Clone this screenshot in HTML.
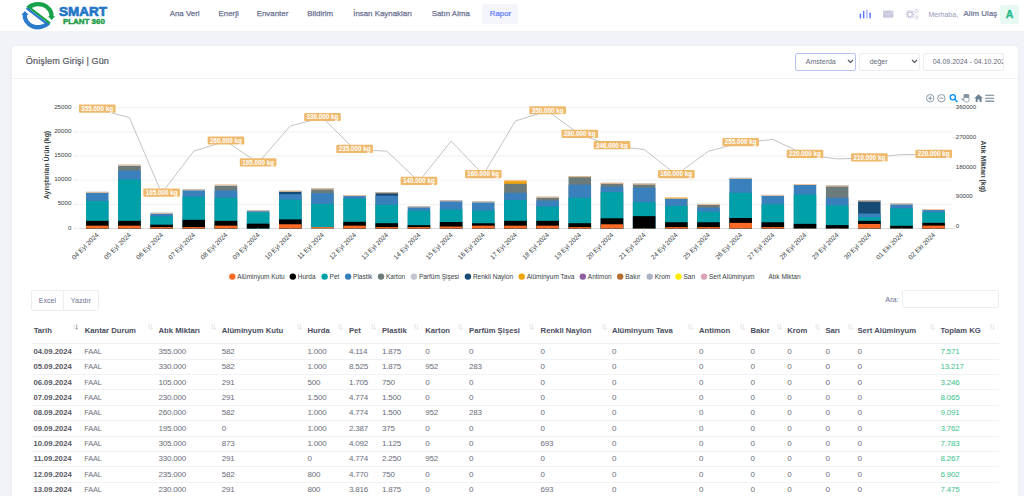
<!DOCTYPE html><html><head><meta charset="utf-8"><style>
*{box-sizing:border-box;margin:0;padding:0}
html,body{width:1024px;height:496px;overflow:hidden;background:#f2f3f8;font-family:"Liberation Sans", sans-serif}
.abs{position:absolute;white-space:nowrap}
#hdr{position:absolute;left:0;top:0;width:1024px;height:31.2px;background:#fff}
.nav{position:absolute;top:9px;font-size:7.9px;color:#6c7293;-webkit-text-stroke:0.25px #6c7293;line-height:10px;white-space:nowrap}
#card{position:absolute;left:12px;top:46px;width:1006px;height:470px;background:#fff;border-radius:3px;box-shadow:0 0 3px rgba(69,65,78,0.07)}
.sel{position:absolute;top:52.5px;white-space:nowrap;height:18px;border:1px solid #ebedf2;border-radius:2px;background:#fff;font-size:7px;color:#666a7a;line-height:16px}
.th{position:absolute;top:326px;font-size:7.7px;font-weight:700;color:#4a4d5e;line-height:9px;white-space:nowrap}
.td{position:absolute;font-size:8px;letter-spacing:-0.2px;color:#6a6d7b;line-height:9px;white-space:nowrap}
.rl{position:absolute;left:31px;width:968px;height:1px;background:#f1f2f6}

</style></head><body>
<div id="hdr">
<svg class="abs" style="left:0;top:0" width="120" height="31" viewBox="0 0 120 31">
<path d="M27.89 8.19 A13.4 11.6 0 0 1 51.42 17.26" fill="none" stroke="#17a14a" stroke-width="4.3"/>
<path d="M47.9 16.2 L55.2 16.2 L51.6 20.0 Z" fill="#17a14a"/>
<path d="M48.41 23.11 A13.4 11.6 0 0 1 24.95 13.64" fill="none" stroke="#2b7bcb" stroke-width="4.3"/>
<path d="M21.4 15.0 L28.6 15.0 L25.0 11.0 Z" fill="#2b7bcb"/>
<path d="M27.9 6.3 L50.0 23.3" stroke="#17a14a" stroke-width="2.3"/>
<path d="M26.5 8.1 L48.6 25.1" stroke="#2b7bcb" stroke-width="2.3"/>
<text x="59" y="16.2" font-family="Liberation Sans" font-weight="700" font-size="13.5" fill="#1f76c6" stroke="#1f76c6" stroke-width="0.7" textLength="48" lengthAdjust="spacingAndGlyphs">SMART</text>
<text x="62.9" y="23.5" font-family="Liberation Sans" font-weight="700" font-size="7.8" fill="#1c9c47" stroke="#1c9c47" stroke-width="0.45" textLength="42" lengthAdjust="spacingAndGlyphs">PLANT 360</text>
</svg>
<div class="abs" style="left:482px;top:4.4px;width:36.4px;height:19.3px;background:#f4f4fb;border-radius:3px"></div>
<div class="nav" style="left:169.7px">Ana Veri</div>
<div class="nav" style="left:218.5px">Enerji</div>
<div class="nav" style="left:256.7px">Envanter</div>
<div class="nav" style="left:307.3px">Bildirim</div>
<div class="nav" style="left:353.2px">İnsan Kaynakları</div>
<div class="nav" style="left:431.7px">Satın Alma</div>
<div class="nav" style="left:489.7px;color:#5d78ff;-webkit-text-stroke:0.2px #5d78ff">Rapor</div>
<svg class="abs" style="left:855px;top:5px" width="70" height="20" viewBox="855 5 70 20">
<rect x="859.6" y="13.6" width="1.5" height="4.9" fill="#5d78ff" rx="0.7"/>
<rect x="862.9" y="10.8" width="1.5" height="7.7" fill="#5d78ff" rx="0.7"/>
<rect x="866.2" y="9.6" width="1.5" height="8.9" fill="#a9b6ff" rx="0.7"/>
<rect x="869.3" y="12.6" width="1.5" height="5.9" fill="#5d78ff" rx="0.7"/>
<rect x="883" y="10.6" width="10.3" height="7.2" rx="0.8" fill="#c9cbdc"/>
<path d="M883.2 11.2 L888.15 14.8 L893.1 11.2" fill="none" stroke="#e6e7ef" stroke-width="0.7"/>
<circle cx="910" cy="14.3" r="3.6" fill="none" stroke="#c9cbdc" stroke-width="1.6" stroke-dasharray="1.2 0.9"/>
<circle cx="910" cy="14.3" r="2.3" fill="none" stroke="#c9cbdc" stroke-width="1.3"/>
<circle cx="916.4" cy="10.9" r="1.7" fill="none" stroke="#c9cbdc" stroke-width="0.9"/>
<circle cx="916.4" cy="17.4" r="1.5" fill="none" stroke="#c9cbdc" stroke-width="0.9"/>
</svg>
<div class="abs" style="left:928.5px;top:9.5px;font-size:7px;color:#959cb6;line-height:9px">Merhaba,</div>
<div class="abs" style="left:963.5px;top:9px;font-size:7.8px;font-weight:400;color:#6c7293;-webkit-text-stroke:0.22px #6c7293;line-height:10px;letter-spacing:0.1px">Alim Ulaş</div>
<div class="abs" style="left:1000px;top:5px;width:19px;height:18.5px;background:#e8f8f3;border-radius:3px;color:#1fbb88;-webkit-text-stroke:0.3px #1fbb88;font-weight:700;font-size:10.5px;line-height:18.5px;text-align:center">A</div>
</div>
<div id="card"></div>
<div class="abs" style="left:25.8px;top:56px;font-size:9.1px;color:#575962;-webkit-text-stroke:0.2px #575962;letter-spacing:0.1px;line-height:10px">Önişlem Girişi | Gün</div>
<div class="abs" style="left:12px;top:77.5px;width:1006px;height:1px;background:#f0f1f6"></div>
<div class="sel" style="left:795.3px;width:61.2px;border-color:#b9c2f5;padding-left:9.5px">Amsterda</div>
<svg class="abs" style="left:846.5px;top:59px" width="7" height="5" viewBox="0 0 7 5"><path d="M1 1 L3.5 3.5 L6 1" fill="none" stroke="#575962" stroke-width="1.2"/></svg>
<div class="sel" style="left:859.2px;width:60.6px;padding-left:9.5px">değer</div>
<svg class="abs" style="left:910.5px;top:59px" width="7" height="5" viewBox="0 0 7 5"><path d="M1 1 L3.5 3.5 L6 1" fill="none" stroke="#575962" stroke-width="1.2"/></svg>
<div class="sel" style="left:923.2px;width:81.2px;padding-left:8.5px;overflow:hidden;color:#666a7a">04.09.2024 - 04.10.2024</div>
<svg class="abs" style="left:0;top:0" width="1024" height="496" viewBox="0 0 1024 496">
<line x1="79" y1="107.75" x2="952.5" y2="107.75" stroke="#ececec" stroke-width="0.8"/>
<line x1="74" y1="107.75" x2="77.5" y2="107.75" stroke="#e0e0e0" stroke-width="0.8"/>
<line x1="79" y1="131.90" x2="952.5" y2="131.90" stroke="#ececec" stroke-width="0.8"/>
<line x1="74" y1="131.90" x2="77.5" y2="131.90" stroke="#e0e0e0" stroke-width="0.8"/>
<line x1="79" y1="156.05" x2="952.5" y2="156.05" stroke="#ececec" stroke-width="0.8"/>
<line x1="74" y1="156.05" x2="77.5" y2="156.05" stroke="#e0e0e0" stroke-width="0.8"/>
<line x1="79" y1="180.20" x2="952.5" y2="180.20" stroke="#ececec" stroke-width="0.8"/>
<line x1="74" y1="180.20" x2="77.5" y2="180.20" stroke="#e0e0e0" stroke-width="0.8"/>
<line x1="79" y1="204.35" x2="952.5" y2="204.35" stroke="#ececec" stroke-width="0.8"/>
<line x1="74" y1="204.35" x2="77.5" y2="204.35" stroke="#e0e0e0" stroke-width="0.8"/>
<line x1="74" y1="228.5" x2="77.5" y2="228.5" stroke="#e0e0e0" stroke-width="0.8"/>
<line x1="79" y1="228.5" x2="952.5" y2="228.5" stroke="#d8d8d8" stroke-width="0.9"/>
<line x1="952.5" y1="107.50" x2="955.5" y2="107.50" stroke="#e0e0e0" stroke-width="0.8"/>
<line x1="952.5" y1="137.75" x2="955.5" y2="137.75" stroke="#e0e0e0" stroke-width="0.8"/>
<line x1="952.5" y1="168.00" x2="955.5" y2="168.00" stroke="#e0e0e0" stroke-width="0.8"/>
<line x1="952.5" y1="198.25" x2="955.5" y2="198.25" stroke="#e0e0e0" stroke-width="0.8"/>
<line x1="952.5" y1="228.50" x2="955.5" y2="228.50" stroke="#e0e0e0" stroke-width="0.8"/>
<text x="71.4" y="108.75" text-anchor="end" font-family="Liberation Sans" font-size="6.2" fill="#373d3f">25000</text>
<text x="71.4" y="132.90" text-anchor="end" font-family="Liberation Sans" font-size="6.2" fill="#373d3f">20000</text>
<text x="71.4" y="157.05" text-anchor="end" font-family="Liberation Sans" font-size="6.2" fill="#373d3f">15000</text>
<text x="71.4" y="181.20" text-anchor="end" font-family="Liberation Sans" font-size="6.2" fill="#373d3f">10000</text>
<text x="71.4" y="205.35" text-anchor="end" font-family="Liberation Sans" font-size="6.2" fill="#373d3f">5000</text>
<text x="71.4" y="229.50" text-anchor="end" font-family="Liberation Sans" font-size="6.2" fill="#373d3f">0</text>
<text x="955.8" y="108.70" font-family="Liberation Sans" font-size="6.1" fill="#373d3f">360000</text>
<text x="955.8" y="138.60" font-family="Liberation Sans" font-size="6.1" fill="#373d3f">270000</text>
<text x="955.8" y="168.50" font-family="Liberation Sans" font-size="6.1" fill="#373d3f">180000</text>
<text x="955.8" y="198.40" font-family="Liberation Sans" font-size="6.1" fill="#373d3f">90000</text>
<text x="955.8" y="228.30" font-family="Liberation Sans" font-size="6.1" fill="#373d3f">0</text>
<text transform="translate(48.6,165) rotate(-90)" text-anchor="middle" font-family="Liberation Sans" font-weight="700" font-size="6.9" fill="#373d3f">Ayrıştırılan Ürün (kg)</text>
<text transform="translate(980.5,166.3) rotate(90)" text-anchor="middle" font-family="Liberation Sans" font-weight="700" font-size="6.9" fill="#373d3f">Atık Miktarı (kg)</text>
<rect x="86.00" y="191.86" width="22.5" height="36.64" fill="#3a80bd"/>
<rect x="86.00" y="200.93" width="22.5" height="27.57" fill="#00a0a8"/>
<rect x="86.00" y="220.84" width="22.5" height="7.66" fill="#000000"/>
<rect x="86.00" y="225.68" width="22.5" height="2.82" fill="#ff6a26"/>
<rect x="86.00" y="191.86" width="22.5" height="1.0" fill="#f3c69c"/>
<line x1="97.25" y1="228.5" x2="97.25" y2="232" stroke="#e0e0e0" stroke-width="0.8"/>
<text transform="translate(99.15,235.3) rotate(-45)" text-anchor="end" font-family="Liberation Sans" font-size="6.6" fill="#373d3f">04 Eyl 2024</text>
<rect x="118.17" y="164.53" width="22.5" height="63.97" fill="#c3c6d1"/>
<rect x="118.17" y="165.90" width="22.5" height="62.60" fill="#6b7b7b"/>
<rect x="118.17" y="170.51" width="22.5" height="57.99" fill="#3a80bd"/>
<rect x="118.17" y="179.58" width="22.5" height="48.92" fill="#00a0a8"/>
<rect x="118.17" y="220.84" width="22.5" height="7.66" fill="#000000"/>
<rect x="118.17" y="225.68" width="22.5" height="2.82" fill="#ff6a26"/>
<rect x="118.17" y="164.53" width="22.5" height="1.0" fill="#f3c69c"/>
<line x1="129.42" y1="228.5" x2="129.42" y2="232" stroke="#e0e0e0" stroke-width="0.8"/>
<text transform="translate(131.32,235.3) rotate(-45)" text-anchor="end" font-family="Liberation Sans" font-size="6.6" fill="#373d3f">05 Eyl 2024</text>
<rect x="150.34" y="212.79" width="22.5" height="15.71" fill="#3a80bd"/>
<rect x="150.34" y="216.42" width="22.5" height="12.08" fill="#00a0a8"/>
<rect x="150.34" y="224.67" width="22.5" height="3.83" fill="#000000"/>
<rect x="150.34" y="227.09" width="22.5" height="1.41" fill="#ff6a26"/>
<rect x="150.34" y="212.79" width="22.5" height="1.0" fill="#f3c69c"/>
<line x1="161.59" y1="228.5" x2="161.59" y2="232" stroke="#e0e0e0" stroke-width="0.8"/>
<text transform="translate(163.49,235.3) rotate(-45)" text-anchor="end" font-family="Liberation Sans" font-size="6.6" fill="#373d3f">06 Eyl 2024</text>
<rect x="182.51" y="189.47" width="22.5" height="39.03" fill="#3a80bd"/>
<rect x="182.51" y="196.73" width="22.5" height="31.77" fill="#00a0a8"/>
<rect x="182.51" y="219.83" width="22.5" height="8.67" fill="#000000"/>
<rect x="182.51" y="227.09" width="22.5" height="1.41" fill="#ff6a26"/>
<rect x="182.51" y="189.47" width="22.5" height="1.0" fill="#f3c69c"/>
<line x1="193.76" y1="228.5" x2="193.76" y2="232" stroke="#e0e0e0" stroke-width="0.8"/>
<text transform="translate(195.66,235.3) rotate(-45)" text-anchor="end" font-family="Liberation Sans" font-size="6.6" fill="#373d3f">07 Eyl 2024</text>
<rect x="214.68" y="184.50" width="22.5" height="44.00" fill="#c3c6d1"/>
<rect x="214.68" y="185.87" width="22.5" height="42.63" fill="#6b7b7b"/>
<rect x="214.68" y="190.48" width="22.5" height="38.02" fill="#3a80bd"/>
<rect x="214.68" y="197.74" width="22.5" height="30.76" fill="#00a0a8"/>
<rect x="214.68" y="220.84" width="22.5" height="7.66" fill="#000000"/>
<rect x="214.68" y="225.68" width="22.5" height="2.82" fill="#ff6a26"/>
<rect x="214.68" y="184.50" width="22.5" height="1.0" fill="#f3c69c"/>
<line x1="225.93" y1="228.5" x2="225.93" y2="232" stroke="#e0e0e0" stroke-width="0.8"/>
<text transform="translate(227.83,235.3) rotate(-45)" text-anchor="end" font-family="Liberation Sans" font-size="6.6" fill="#373d3f">08 Eyl 2024</text>
<rect x="246.85" y="210.29" width="22.5" height="18.21" fill="#3a80bd"/>
<rect x="246.85" y="212.11" width="22.5" height="16.39" fill="#00a0a8"/>
<rect x="246.85" y="223.66" width="22.5" height="4.84" fill="#000000"/>
<rect x="246.85" y="210.29" width="22.5" height="1.0" fill="#f3c69c"/>
<line x1="258.10" y1="228.5" x2="258.10" y2="232" stroke="#e0e0e0" stroke-width="0.8"/>
<text transform="translate(260.00,235.3) rotate(-45)" text-anchor="end" font-family="Liberation Sans" font-size="6.6" fill="#373d3f">09 Eyl 2024</text>
<rect x="279.02" y="190.83" width="22.5" height="37.67" fill="#154b74"/>
<rect x="279.02" y="194.18" width="22.5" height="34.32" fill="#3a80bd"/>
<rect x="279.02" y="199.63" width="22.5" height="28.87" fill="#00a0a8"/>
<rect x="279.02" y="219.43" width="22.5" height="9.07" fill="#000000"/>
<rect x="279.02" y="224.27" width="22.5" height="4.23" fill="#ff6a26"/>
<rect x="279.02" y="190.83" width="22.5" height="1.0" fill="#f3c69c"/>
<line x1="290.27" y1="228.5" x2="290.27" y2="232" stroke="#e0e0e0" stroke-width="0.8"/>
<text transform="translate(292.17,235.3) rotate(-45)" text-anchor="end" font-family="Liberation Sans" font-size="6.6" fill="#373d3f">10 Eyl 2024</text>
<rect x="311.19" y="188.49" width="22.5" height="40.01" fill="#6b7b7b"/>
<rect x="311.19" y="193.10" width="22.5" height="35.40" fill="#3a80bd"/>
<rect x="311.19" y="203.99" width="22.5" height="24.51" fill="#00a0a8"/>
<rect x="311.19" y="227.09" width="22.5" height="1.41" fill="#ff6a26"/>
<rect x="311.19" y="188.49" width="22.5" height="1.0" fill="#f3c69c"/>
<line x1="322.44" y1="228.5" x2="322.44" y2="232" stroke="#e0e0e0" stroke-width="0.8"/>
<text transform="translate(324.34,235.3) rotate(-45)" text-anchor="end" font-family="Liberation Sans" font-size="6.6" fill="#373d3f">11 Eyl 2024</text>
<rect x="343.36" y="195.09" width="22.5" height="33.41" fill="#3a80bd"/>
<rect x="343.36" y="198.72" width="22.5" height="29.78" fill="#00a0a8"/>
<rect x="343.36" y="221.81" width="22.5" height="6.69" fill="#000000"/>
<rect x="343.36" y="225.68" width="22.5" height="2.82" fill="#ff6a26"/>
<rect x="343.36" y="195.09" width="22.5" height="1.0" fill="#f3c69c"/>
<line x1="354.61" y1="228.5" x2="354.61" y2="232" stroke="#e0e0e0" stroke-width="0.8"/>
<text transform="translate(356.51,235.3) rotate(-45)" text-anchor="end" font-family="Liberation Sans" font-size="6.6" fill="#373d3f">12 Eyl 2024</text>
<rect x="375.53" y="192.32" width="22.5" height="36.18" fill="#154b74"/>
<rect x="375.53" y="195.68" width="22.5" height="32.82" fill="#3a80bd"/>
<rect x="375.53" y="204.75" width="22.5" height="23.75" fill="#00a0a8"/>
<rect x="375.53" y="223.22" width="22.5" height="5.28" fill="#000000"/>
<rect x="375.53" y="227.09" width="22.5" height="1.41" fill="#ff6a26"/>
<rect x="375.53" y="192.32" width="22.5" height="1.0" fill="#f3c69c"/>
<line x1="386.78" y1="228.5" x2="386.78" y2="232" stroke="#e0e0e0" stroke-width="0.8"/>
<text transform="translate(388.68,235.3) rotate(-45)" text-anchor="end" font-family="Liberation Sans" font-size="6.6" fill="#373d3f">13 Eyl 2024</text>
<rect x="407.70" y="206.40" width="22.5" height="22.10" fill="#3a80bd"/>
<rect x="407.70" y="210.64" width="22.5" height="17.86" fill="#00a0a8"/>
<rect x="407.70" y="225.16" width="22.5" height="3.34" fill="#000000"/>
<rect x="407.70" y="227.09" width="22.5" height="1.41" fill="#ff6a26"/>
<rect x="407.70" y="206.40" width="22.5" height="1.0" fill="#f3c69c"/>
<line x1="418.95" y1="228.5" x2="418.95" y2="232" stroke="#e0e0e0" stroke-width="0.8"/>
<text transform="translate(420.85,235.3) rotate(-45)" text-anchor="end" font-family="Liberation Sans" font-size="6.6" fill="#373d3f">14 Eyl 2024</text>
<rect x="439.87" y="200.40" width="22.5" height="28.10" fill="#3a80bd"/>
<rect x="439.87" y="209.48" width="22.5" height="19.02" fill="#00a0a8"/>
<rect x="439.87" y="222.01" width="22.5" height="6.49" fill="#000000"/>
<rect x="439.87" y="226.56" width="22.5" height="1.94" fill="#ff6a26"/>
<rect x="439.87" y="200.40" width="22.5" height="1.0" fill="#f3c69c"/>
<line x1="451.12" y1="228.5" x2="451.12" y2="232" stroke="#e0e0e0" stroke-width="0.8"/>
<text transform="translate(453.02,235.3) rotate(-45)" text-anchor="end" font-family="Liberation Sans" font-size="6.6" fill="#373d3f">15 Eyl 2024</text>
<rect x="472.04" y="201.51" width="22.5" height="26.99" fill="#3a80bd"/>
<rect x="472.04" y="210.58" width="22.5" height="17.92" fill="#00a0a8"/>
<rect x="472.04" y="223.26" width="22.5" height="5.24" fill="#000000"/>
<rect x="472.04" y="225.68" width="22.5" height="2.82" fill="#ff6a26"/>
<rect x="472.04" y="201.51" width="22.5" height="1.0" fill="#f3c69c"/>
<line x1="483.29" y1="228.5" x2="483.29" y2="232" stroke="#e0e0e0" stroke-width="0.8"/>
<text transform="translate(485.19,235.3) rotate(-45)" text-anchor="end" font-family="Liberation Sans" font-size="6.6" fill="#373d3f">16 Eyl 2024</text>
<rect x="504.21" y="180.24" width="22.5" height="48.26" fill="#f0a30a"/>
<rect x="504.21" y="183.82" width="22.5" height="44.68" fill="#6b7b7b"/>
<rect x="504.21" y="192.77" width="22.5" height="35.73" fill="#3a80bd"/>
<rect x="504.21" y="200.03" width="22.5" height="28.47" fill="#00a0a8"/>
<rect x="504.21" y="220.84" width="22.5" height="7.66" fill="#000000"/>
<rect x="504.21" y="225.68" width="22.5" height="2.82" fill="#ff6a26"/>
<rect x="504.21" y="180.24" width="22.5" height="1.0" fill="#f3c69c"/>
<line x1="515.46" y1="228.5" x2="515.46" y2="232" stroke="#e0e0e0" stroke-width="0.8"/>
<text transform="translate(517.36,235.3) rotate(-45)" text-anchor="end" font-family="Liberation Sans" font-size="6.6" fill="#373d3f">17 Eyl 2024</text>
<rect x="536.38" y="196.79" width="22.5" height="31.71" fill="#6b7b7b"/>
<rect x="536.38" y="200.52" width="22.5" height="27.98" fill="#3a80bd"/>
<rect x="536.38" y="206.52" width="22.5" height="21.98" fill="#00a0a8"/>
<rect x="536.38" y="220.84" width="22.5" height="7.66" fill="#000000"/>
<rect x="536.38" y="225.68" width="22.5" height="2.82" fill="#ff6a26"/>
<rect x="536.38" y="196.79" width="22.5" height="1.0" fill="#f3c69c"/>
<line x1="547.63" y1="228.5" x2="547.63" y2="232" stroke="#e0e0e0" stroke-width="0.8"/>
<text transform="translate(549.53,235.3) rotate(-45)" text-anchor="end" font-family="Liberation Sans" font-size="6.6" fill="#373d3f">18 Eyl 2024</text>
<rect x="568.55" y="176.20" width="22.5" height="52.30" fill="#6b7b7b"/>
<rect x="568.55" y="184.67" width="22.5" height="43.83" fill="#3a80bd"/>
<rect x="568.55" y="197.69" width="22.5" height="30.81" fill="#00a0a8"/>
<rect x="568.55" y="223.22" width="22.5" height="5.28" fill="#000000"/>
<rect x="568.55" y="227.09" width="22.5" height="1.41" fill="#ff6a26"/>
<rect x="568.55" y="176.20" width="22.5" height="1.0" fill="#f3c69c"/>
<line x1="579.80" y1="228.5" x2="579.80" y2="232" stroke="#e0e0e0" stroke-width="0.8"/>
<text transform="translate(581.70,235.3) rotate(-45)" text-anchor="end" font-family="Liberation Sans" font-size="6.6" fill="#373d3f">19 Eyl 2024</text>
<rect x="600.72" y="182.80" width="22.5" height="45.70" fill="#6b7b7b"/>
<rect x="600.72" y="186.86" width="22.5" height="41.64" fill="#3a80bd"/>
<rect x="600.72" y="192.23" width="22.5" height="36.27" fill="#00a0a8"/>
<rect x="600.72" y="218.27" width="22.5" height="10.23" fill="#000000"/>
<rect x="600.72" y="224.27" width="22.5" height="4.23" fill="#ff6a26"/>
<rect x="600.72" y="182.80" width="22.5" height="1.0" fill="#f3c69c"/>
<line x1="611.97" y1="228.5" x2="611.97" y2="232" stroke="#e0e0e0" stroke-width="0.8"/>
<text transform="translate(613.87,235.3) rotate(-45)" text-anchor="end" font-family="Liberation Sans" font-size="6.6" fill="#373d3f">20 Eyl 2024</text>
<rect x="632.89" y="183.63" width="22.5" height="44.87" fill="#6b7b7b"/>
<rect x="632.89" y="187.70" width="22.5" height="40.80" fill="#3a80bd"/>
<rect x="632.89" y="202.32" width="22.5" height="26.18" fill="#00a0a8"/>
<rect x="632.89" y="216.16" width="22.5" height="12.34" fill="#000000"/>
<rect x="632.89" y="228.21" width="22.5" height="0.29" fill="#ff6a26"/>
<rect x="632.89" y="183.63" width="22.5" height="1.0" fill="#f3c69c"/>
<line x1="644.14" y1="228.5" x2="644.14" y2="232" stroke="#e0e0e0" stroke-width="0.8"/>
<text transform="translate(646.04,235.3) rotate(-45)" text-anchor="end" font-family="Liberation Sans" font-size="6.6" fill="#373d3f">21 Eyl 2024</text>
<rect x="665.06" y="197.54" width="22.5" height="30.96" fill="#f0a30a"/>
<rect x="665.06" y="198.68" width="22.5" height="29.82" fill="#3a80bd"/>
<rect x="665.06" y="205.99" width="22.5" height="22.51" fill="#00a0a8"/>
<rect x="665.06" y="222.25" width="22.5" height="6.25" fill="#000000"/>
<rect x="665.06" y="227.09" width="22.5" height="1.41" fill="#ff6a26"/>
<rect x="665.06" y="197.54" width="22.5" height="1.0" fill="#f3c69c"/>
<line x1="676.31" y1="228.5" x2="676.31" y2="232" stroke="#e0e0e0" stroke-width="0.8"/>
<text transform="translate(678.21,235.3) rotate(-45)" text-anchor="end" font-family="Liberation Sans" font-size="6.6" fill="#373d3f">24 Eyl 2024</text>
<rect x="697.23" y="203.91" width="22.5" height="24.59" fill="#6b7b7b"/>
<rect x="697.23" y="207.63" width="22.5" height="20.87" fill="#3a80bd"/>
<rect x="697.23" y="211.70" width="22.5" height="16.80" fill="#00a0a8"/>
<rect x="697.23" y="222.25" width="22.5" height="6.25" fill="#000000"/>
<rect x="697.23" y="227.09" width="22.5" height="1.41" fill="#ff6a26"/>
<rect x="697.23" y="203.91" width="22.5" height="1.0" fill="#f3c69c"/>
<line x1="708.48" y1="228.5" x2="708.48" y2="232" stroke="#e0e0e0" stroke-width="0.8"/>
<text transform="translate(710.38,235.3) rotate(-45)" text-anchor="end" font-family="Liberation Sans" font-size="6.6" fill="#373d3f">25 Eyl 2024</text>
<rect x="729.40" y="177.85" width="22.5" height="50.65" fill="#3a80bd"/>
<rect x="729.40" y="192.81" width="22.5" height="35.69" fill="#00a0a8"/>
<rect x="729.40" y="218.03" width="22.5" height="10.47" fill="#000000"/>
<rect x="729.40" y="222.87" width="22.5" height="5.63" fill="#ff6a26"/>
<rect x="729.40" y="177.85" width="22.5" height="1.0" fill="#f3c69c"/>
<line x1="740.65" y1="228.5" x2="740.65" y2="232" stroke="#e0e0e0" stroke-width="0.8"/>
<text transform="translate(742.55,235.3) rotate(-45)" text-anchor="end" font-family="Liberation Sans" font-size="6.6" fill="#373d3f">26 Eyl 2024</text>
<rect x="761.57" y="194.91" width="22.5" height="33.59" fill="#3a80bd"/>
<rect x="761.57" y="204.34" width="22.5" height="24.16" fill="#00a0a8"/>
<rect x="761.57" y="222.25" width="22.5" height="6.25" fill="#000000"/>
<rect x="761.57" y="227.09" width="22.5" height="1.41" fill="#ff6a26"/>
<rect x="761.57" y="194.91" width="22.5" height="1.0" fill="#f3c69c"/>
<line x1="772.82" y1="228.5" x2="772.82" y2="232" stroke="#e0e0e0" stroke-width="0.8"/>
<text transform="translate(774.72,235.3) rotate(-45)" text-anchor="end" font-family="Liberation Sans" font-size="6.6" fill="#373d3f">27 Eyl 2024</text>
<rect x="793.74" y="184.02" width="22.5" height="44.48" fill="#3a80bd"/>
<rect x="793.74" y="194.57" width="22.5" height="33.93" fill="#00a0a8"/>
<rect x="793.74" y="223.85" width="22.5" height="4.65" fill="#000000"/>
<rect x="793.74" y="228.21" width="22.5" height="0.29" fill="#ff6a26"/>
<rect x="793.74" y="184.02" width="22.5" height="1.0" fill="#f3c69c"/>
<line x1="804.99" y1="228.5" x2="804.99" y2="232" stroke="#e0e0e0" stroke-width="0.8"/>
<text transform="translate(806.89,235.3) rotate(-45)" text-anchor="end" font-family="Liberation Sans" font-size="6.6" fill="#373d3f">28 Eyl 2024</text>
<rect x="825.91" y="185.57" width="22.5" height="42.93" fill="#6b7b7b"/>
<rect x="825.91" y="197.77" width="22.5" height="30.73" fill="#3a80bd"/>
<rect x="825.91" y="205.41" width="22.5" height="23.09" fill="#00a0a8"/>
<rect x="825.91" y="225.11" width="22.5" height="3.39" fill="#000000"/>
<rect x="825.91" y="228.21" width="22.5" height="0.29" fill="#ff6a26"/>
<rect x="825.91" y="185.57" width="22.5" height="1.0" fill="#f3c69c"/>
<line x1="837.16" y1="228.5" x2="837.16" y2="232" stroke="#e0e0e0" stroke-width="0.8"/>
<text transform="translate(839.06,235.3) rotate(-45)" text-anchor="end" font-family="Liberation Sans" font-size="6.6" fill="#373d3f">29 Eyl 2024</text>
<rect x="858.08" y="200.52" width="22.5" height="27.98" fill="#154b74"/>
<rect x="858.08" y="213.54" width="22.5" height="14.96" fill="#3a80bd"/>
<rect x="858.08" y="217.13" width="22.5" height="11.37" fill="#00a0a8"/>
<rect x="858.08" y="220.85" width="22.5" height="7.65" fill="#000000"/>
<rect x="858.08" y="223.95" width="22.5" height="4.55" fill="#ff6a26"/>
<rect x="858.08" y="200.52" width="22.5" height="1.0" fill="#f3c69c"/>
<line x1="869.33" y1="228.5" x2="869.33" y2="232" stroke="#e0e0e0" stroke-width="0.8"/>
<text transform="translate(871.23,235.3) rotate(-45)" text-anchor="end" font-family="Liberation Sans" font-size="6.6" fill="#373d3f">30 Eyl 2024</text>
<rect x="890.25" y="203.53" width="22.5" height="24.97" fill="#3a80bd"/>
<rect x="890.25" y="208.37" width="22.5" height="20.13" fill="#00a0a8"/>
<rect x="890.25" y="225.79" width="22.5" height="2.71" fill="#000000"/>
<rect x="890.25" y="228.21" width="22.5" height="0.29" fill="#ff6a26"/>
<rect x="890.25" y="203.53" width="22.5" height="1.0" fill="#f3c69c"/>
<line x1="901.50" y1="228.5" x2="901.50" y2="232" stroke="#e0e0e0" stroke-width="0.8"/>
<text transform="translate(903.40,235.3) rotate(-45)" text-anchor="end" font-family="Liberation Sans" font-size="6.6" fill="#373d3f">01 Eki 2024</text>
<rect x="922.42" y="209.04" width="22.5" height="19.46" fill="#3a80bd"/>
<rect x="922.42" y="212.29" width="22.5" height="16.21" fill="#00a0a8"/>
<rect x="922.42" y="222.84" width="22.5" height="5.66" fill="#000000"/>
<rect x="922.42" y="225.60" width="22.5" height="2.90" fill="#ff6a26"/>
<rect x="922.42" y="209.04" width="22.5" height="1.0" fill="#f3c69c"/>
<line x1="933.67" y1="228.5" x2="933.67" y2="232" stroke="#e0e0e0" stroke-width="0.8"/>
<text transform="translate(935.57,235.3) rotate(-45)" text-anchor="end" font-family="Liberation Sans" font-size="6.6" fill="#373d3f">02 Eki 2024</text>
<polyline points="97.25,109.18 129.42,117.58 161.59,193.21 193.76,151.19 225.93,141.11 258.10,162.96 290.27,125.99 322.44,117.58 354.61,149.51 386.78,151.19 418.95,181.44 451.12,141.11 483.29,174.72 515.46,120.94 547.63,110.86 579.80,134.39 611.97,145.82 644.14,149.51 676.31,174.72 708.48,151.19 740.65,142.79 772.82,139.43 804.99,154.56 837.16,158.93 869.33,157.92 901.50,154.56 933.67,154.56" fill="none" stroke="#b4b4b4" stroke-width="0.8"/>
<rect x="78.95" y="104.48" width="36.6" height="8.2" rx="1" fill="#efb96c"/>
<text x="97.25" y="110.88" text-anchor="middle" font-family="Liberation Sans" font-weight="700" font-size="6.3" fill="#fff">355.000 kg</text>
<rect x="143.29" y="188.51" width="36.6" height="8.2" rx="1" fill="#efb96c"/>
<text x="161.59" y="194.91" text-anchor="middle" font-family="Liberation Sans" font-weight="700" font-size="6.3" fill="#fff">105.000 kg</text>
<rect x="207.63" y="136.41" width="36.6" height="8.2" rx="1" fill="#efb96c"/>
<text x="225.93" y="142.81" text-anchor="middle" font-family="Liberation Sans" font-weight="700" font-size="6.3" fill="#fff">260.000 kg</text>
<rect x="239.80" y="158.26" width="36.6" height="8.2" rx="1" fill="#efb96c"/>
<text x="258.10" y="164.66" text-anchor="middle" font-family="Liberation Sans" font-weight="700" font-size="6.3" fill="#fff">195.000 kg</text>
<rect x="304.14" y="112.88" width="36.6" height="8.2" rx="1" fill="#efb96c"/>
<text x="322.44" y="119.28" text-anchor="middle" font-family="Liberation Sans" font-weight="700" font-size="6.3" fill="#fff">330.000 kg</text>
<rect x="336.31" y="144.81" width="36.6" height="8.2" rx="1" fill="#efb96c"/>
<text x="354.61" y="151.21" text-anchor="middle" font-family="Liberation Sans" font-weight="700" font-size="6.3" fill="#fff">235.000 kg</text>
<rect x="400.65" y="176.74" width="36.6" height="8.2" rx="1" fill="#efb96c"/>
<text x="418.95" y="183.14" text-anchor="middle" font-family="Liberation Sans" font-weight="700" font-size="6.3" fill="#fff">140.000 kg</text>
<rect x="464.99" y="170.02" width="36.6" height="8.2" rx="1" fill="#efb96c"/>
<text x="483.29" y="176.42" text-anchor="middle" font-family="Liberation Sans" font-weight="700" font-size="6.3" fill="#fff">160.000 kg</text>
<rect x="529.33" y="106.16" width="36.6" height="8.2" rx="1" fill="#efb96c"/>
<text x="547.63" y="112.56" text-anchor="middle" font-family="Liberation Sans" font-weight="700" font-size="6.3" fill="#fff">350.000 kg</text>
<rect x="561.50" y="129.69" width="36.6" height="8.2" rx="1" fill="#efb96c"/>
<text x="579.80" y="136.09" text-anchor="middle" font-family="Liberation Sans" font-weight="700" font-size="6.3" fill="#fff">280.000 kg</text>
<rect x="593.67" y="141.12" width="36.6" height="8.2" rx="1" fill="#efb96c"/>
<text x="611.97" y="147.52" text-anchor="middle" font-family="Liberation Sans" font-weight="700" font-size="6.3" fill="#fff">246.000 kg</text>
<rect x="658.01" y="170.02" width="36.6" height="8.2" rx="1" fill="#efb96c"/>
<text x="676.31" y="176.42" text-anchor="middle" font-family="Liberation Sans" font-weight="700" font-size="6.3" fill="#fff">160.000 kg</text>
<rect x="722.35" y="138.09" width="36.6" height="8.2" rx="1" fill="#efb96c"/>
<text x="740.65" y="144.49" text-anchor="middle" font-family="Liberation Sans" font-weight="700" font-size="6.3" fill="#fff">255.000 kg</text>
<rect x="786.69" y="149.86" width="36.6" height="8.2" rx="1" fill="#efb96c"/>
<text x="804.99" y="156.26" text-anchor="middle" font-family="Liberation Sans" font-weight="700" font-size="6.3" fill="#fff">220.000 kg</text>
<rect x="851.03" y="153.22" width="36.6" height="8.2" rx="1" fill="#efb96c"/>
<text x="869.33" y="159.62" text-anchor="middle" font-family="Liberation Sans" font-weight="700" font-size="6.3" fill="#fff">210.000 kg</text>
<rect x="915.37" y="149.86" width="36.6" height="8.2" rx="1" fill="#efb96c"/>
<text x="933.67" y="156.26" text-anchor="middle" font-family="Liberation Sans" font-weight="700" font-size="6.3" fill="#fff">220.000 kg</text>
<g fill="none" stroke="#6e8192" stroke-width="0.8">
<circle cx="930.2" cy="98.2" r="3.7"/><path d="M928.2 98.2 H932.2 M930.2 96.2 V100.2"/>
<circle cx="941.4" cy="98.2" r="3.7"/><path d="M939.4 98.2 H943.4"/>
</g>
<g fill="none" stroke="#008ffb" stroke-width="1.3"><circle cx="952.8" cy="97.3" r="2.6"/><path d="M954.7 99.2 L957.5 102"/></g>
<rect x="963.6" y="93.9" width="5.6" height="4.6" rx="1.3" fill="#8596a5"/><path d="M963.9 98 V100.4 Q964.5 102 966.1 102 H967.6 Q969.0 102 969.0 100.2 V98" fill="#fff" stroke="#8596a5" stroke-width="0.8"/><path d="M963.8 99.3 L961.4 98.2 L961.1 98.9 L963.8 101.2 Z" fill="#8596a5"/>
<path d="M974.3 98.3 L978.6 94.3 L983 98.3 L981.6 98.3 L981.6 102 L979.6 102 L979.6 99.5 L977.6 99.5 L977.6 102 L975.7 102 L975.7 98.3 Z" fill="#6e8192"/>
<path d="M985.2 95.3 H994.2 M985.2 98.2 H994.2 M985.2 101.1 H994.2" stroke="#6e8192" stroke-width="1.1"/>

<circle cx="232.3" cy="276.6" r="3.2" fill="#ff6a26"/>
<text x="237.30" y="278.9" font-family="Liberation Sans" font-size="6.5" fill="#373d3f">Alüminyum Kutu</text>
<circle cx="292.8" cy="276.6" r="3.2" fill="#000000"/>
<text x="297.80" y="278.9" font-family="Liberation Sans" font-size="6.5" fill="#373d3f">Hurda</text>
<circle cx="324.6" cy="276.6" r="3.2" fill="#00a0a8"/>
<text x="329.60" y="278.9" font-family="Liberation Sans" font-size="6.5" fill="#373d3f">Pet</text>
<circle cx="348.1" cy="276.6" r="3.2" fill="#3a80bd"/>
<text x="353.10" y="278.9" font-family="Liberation Sans" font-size="6.5" fill="#373d3f">Plastik</text>
<circle cx="381.0" cy="276.6" r="3.2" fill="#6b7b7b"/>
<text x="386.00" y="278.9" font-family="Liberation Sans" font-size="6.5" fill="#373d3f">Karton</text>
<circle cx="413.9" cy="276.6" r="3.2" fill="#c3c6d1"/>
<text x="418.90" y="278.9" font-family="Liberation Sans" font-size="6.5" fill="#373d3f">Parfüm Şişesi</text>
<circle cx="467.9" cy="276.6" r="3.2" fill="#154b74"/>
<text x="472.90" y="278.9" font-family="Liberation Sans" font-size="6.5" fill="#373d3f">Renkli Naylon</text>
<circle cx="521.7" cy="276.6" r="3.2" fill="#f0a30a"/>
<text x="526.70" y="278.9" font-family="Liberation Sans" font-size="6.5" fill="#373d3f">Alüminyum Tava</text>
<circle cx="582.8" cy="276.6" r="3.2" fill="#8e5f9e"/>
<text x="587.80" y="278.9" font-family="Liberation Sans" font-size="6.5" fill="#373d3f">Antimon</text>
<circle cx="620.2" cy="276.6" r="3.2" fill="#b56d2f"/>
<text x="625.20" y="278.9" font-family="Liberation Sans" font-size="6.5" fill="#373d3f">Bakır</text>
<circle cx="649.7" cy="276.6" r="3.2" fill="#aab3c6"/>
<text x="654.70" y="278.9" font-family="Liberation Sans" font-size="6.5" fill="#373d3f">Krom</text>
<circle cx="678.5" cy="276.6" r="3.2" fill="#ffee00"/>
<text x="683.50" y="278.9" font-family="Liberation Sans" font-size="6.5" fill="#373d3f">Sarı</text>
<circle cx="704.0" cy="276.6" r="3.2" fill="#dba3b8"/>
<text x="709.00" y="278.9" font-family="Liberation Sans" font-size="6.5" fill="#373d3f">Sert Alüminyum</text>
<text x="768.4" y="278.9" font-family="Liberation Sans" font-size="6.5" fill="#373d3f">Atık Miktarı</text>
</svg>
<div class="abs" style="left:31.2px;top:290.4px;width:68.2px;height:20.2px;border:1px solid #ebedf2;border-radius:2px"></div>
<div class="abs" style="left:63.3px;top:290.4px;width:1px;height:20.2px;background:#ebedf2"></div>
<div class="abs" style="left:38.7px;top:297px;font-size:7.1px;color:#6c7293;line-height:9px">Excel</div>
<div class="abs" style="left:70.8px;top:297px;font-size:7.1px;color:#6c7293;line-height:9px">Yazdır</div>
<div class="abs" style="left:885.3px;top:295px;font-size:7.3px;color:#6c7293;line-height:9px">Ara:</div>
<div class="abs" style="left:902.3px;top:290.4px;width:96.4px;height:17.5px;border:1px solid #ebedf2;border-radius:2px"></div>
<div class="th" style="left:33.7px">Tarih</div>
<svg class="abs" style="left:73.2px;top:324px" width="5" height="6" viewBox="0 0 5 6"><path d="M1.2 5.5 V0.8 M0.2 1.8 L1.2 0.6 L2.2 1.8" fill="none" stroke="#d6d8e0" stroke-width="0.6"/><path d="M3.6 0.5 V5.2 M2.6 4.2 L3.6 5.4 L4.6 4.2" fill="none" stroke="#6c7080" stroke-width="0.6"/></svg>
<div class="th" style="left:84.7px">Kantar Durum</div>
<svg class="abs" style="left:147.6px;top:324px" width="5" height="6" viewBox="0 0 5 6"><path d="M1.2 5.5 V0.8 M0.2 1.8 L1.2 0.6 L2.2 1.8" fill="none" stroke="#d6d8e0" stroke-width="0.6"/><path d="M3.6 0.5 V5.2 M2.6 4.2 L3.6 5.4 L4.6 4.2" fill="none" stroke="#d6d8e0" stroke-width="0.6"/></svg>
<div class="th" style="left:158.5px">Atık Miktarı</div>
<svg class="abs" style="left:210.6px;top:324px" width="5" height="6" viewBox="0 0 5 6"><path d="M1.2 5.5 V0.8 M0.2 1.8 L1.2 0.6 L2.2 1.8" fill="none" stroke="#d6d8e0" stroke-width="0.6"/><path d="M3.6 0.5 V5.2 M2.6 4.2 L3.6 5.4 L4.6 4.2" fill="none" stroke="#d6d8e0" stroke-width="0.6"/></svg>
<div class="th" style="left:221.7px">Alüminyum Kutu</div>
<svg class="abs" style="left:296.6px;top:324px" width="5" height="6" viewBox="0 0 5 6"><path d="M1.2 5.5 V0.8 M0.2 1.8 L1.2 0.6 L2.2 1.8" fill="none" stroke="#d6d8e0" stroke-width="0.6"/><path d="M3.6 0.5 V5.2 M2.6 4.2 L3.6 5.4 L4.6 4.2" fill="none" stroke="#d6d8e0" stroke-width="0.6"/></svg>
<div class="th" style="left:307.5px">Hurda</div>
<svg class="abs" style="left:338px;top:324px" width="5" height="6" viewBox="0 0 5 6"><path d="M1.2 5.5 V0.8 M0.2 1.8 L1.2 0.6 L2.2 1.8" fill="none" stroke="#d6d8e0" stroke-width="0.6"/><path d="M3.6 0.5 V5.2 M2.6 4.2 L3.6 5.4 L4.6 4.2" fill="none" stroke="#d6d8e0" stroke-width="0.6"/></svg>
<div class="th" style="left:348.9px">Pet</div>
<svg class="abs" style="left:371px;top:324px" width="5" height="6" viewBox="0 0 5 6"><path d="M1.2 5.5 V0.8 M0.2 1.8 L1.2 0.6 L2.2 1.8" fill="none" stroke="#d6d8e0" stroke-width="0.6"/><path d="M3.6 0.5 V5.2 M2.6 4.2 L3.6 5.4 L4.6 4.2" fill="none" stroke="#d6d8e0" stroke-width="0.6"/></svg>
<div class="th" style="left:381.9px">Plastik</div>
<svg class="abs" style="left:414.4px;top:324px" width="5" height="6" viewBox="0 0 5 6"><path d="M1.2 5.5 V0.8 M0.2 1.8 L1.2 0.6 L2.2 1.8" fill="none" stroke="#d6d8e0" stroke-width="0.6"/><path d="M3.6 0.5 V5.2 M2.6 4.2 L3.6 5.4 L4.6 4.2" fill="none" stroke="#d6d8e0" stroke-width="0.6"/></svg>
<div class="th" style="left:425.3px">Karton</div>
<svg class="abs" style="left:458.3px;top:324px" width="5" height="6" viewBox="0 0 5 6"><path d="M1.2 5.5 V0.8 M0.2 1.8 L1.2 0.6 L2.2 1.8" fill="none" stroke="#d6d8e0" stroke-width="0.6"/><path d="M3.6 0.5 V5.2 M2.6 4.2 L3.6 5.4 L4.6 4.2" fill="none" stroke="#d6d8e0" stroke-width="0.6"/></svg>
<div class="th" style="left:469px">Parfüm Şişesi</div>
<svg class="abs" style="left:529.4px;top:324px" width="5" height="6" viewBox="0 0 5 6"><path d="M1.2 5.5 V0.8 M0.2 1.8 L1.2 0.6 L2.2 1.8" fill="none" stroke="#d6d8e0" stroke-width="0.6"/><path d="M3.6 0.5 V5.2 M2.6 4.2 L3.6 5.4 L4.6 4.2" fill="none" stroke="#d6d8e0" stroke-width="0.6"/></svg>
<div class="th" style="left:540.6px">Renkli Naylon</div>
<svg class="abs" style="left:601.5px;top:324px" width="5" height="6" viewBox="0 0 5 6"><path d="M1.2 5.5 V0.8 M0.2 1.8 L1.2 0.6 L2.2 1.8" fill="none" stroke="#d6d8e0" stroke-width="0.6"/><path d="M3.6 0.5 V5.2 M2.6 4.2 L3.6 5.4 L4.6 4.2" fill="none" stroke="#d6d8e0" stroke-width="0.6"/></svg>
<div class="th" style="left:611.9px">Alüminyum Tava</div>
<svg class="abs" style="left:688.3px;top:324px" width="5" height="6" viewBox="0 0 5 6"><path d="M1.2 5.5 V0.8 M0.2 1.8 L1.2 0.6 L2.2 1.8" fill="none" stroke="#d6d8e0" stroke-width="0.6"/><path d="M3.6 0.5 V5.2 M2.6 4.2 L3.6 5.4 L4.6 4.2" fill="none" stroke="#d6d8e0" stroke-width="0.6"/></svg>
<div class="th" style="left:699px">Antimon</div>
<svg class="abs" style="left:739.6px;top:324px" width="5" height="6" viewBox="0 0 5 6"><path d="M1.2 5.5 V0.8 M0.2 1.8 L1.2 0.6 L2.2 1.8" fill="none" stroke="#d6d8e0" stroke-width="0.6"/><path d="M3.6 0.5 V5.2 M2.6 4.2 L3.6 5.4 L4.6 4.2" fill="none" stroke="#d6d8e0" stroke-width="0.6"/></svg>
<div class="th" style="left:750.5px">Bakır</div>
<svg class="abs" style="left:776.9px;top:324px" width="5" height="6" viewBox="0 0 5 6"><path d="M1.2 5.5 V0.8 M0.2 1.8 L1.2 0.6 L2.2 1.8" fill="none" stroke="#d6d8e0" stroke-width="0.6"/><path d="M3.6 0.5 V5.2 M2.6 4.2 L3.6 5.4 L4.6 4.2" fill="none" stroke="#d6d8e0" stroke-width="0.6"/></svg>
<div class="th" style="left:787.3px">Krom</div>
<svg class="abs" style="left:814.5px;top:324px" width="5" height="6" viewBox="0 0 5 6"><path d="M1.2 5.5 V0.8 M0.2 1.8 L1.2 0.6 L2.2 1.8" fill="none" stroke="#d6d8e0" stroke-width="0.6"/><path d="M3.6 0.5 V5.2 M2.6 4.2 L3.6 5.4 L4.6 4.2" fill="none" stroke="#d6d8e0" stroke-width="0.6"/></svg>
<div class="th" style="left:825.4px">Sarı</div>
<svg class="abs" style="left:847.5px;top:324px" width="5" height="6" viewBox="0 0 5 6"><path d="M1.2 5.5 V0.8 M0.2 1.8 L1.2 0.6 L2.2 1.8" fill="none" stroke="#d6d8e0" stroke-width="0.6"/><path d="M3.6 0.5 V5.2 M2.6 4.2 L3.6 5.4 L4.6 4.2" fill="none" stroke="#d6d8e0" stroke-width="0.6"/></svg>
<div class="th" style="left:857.4px">Sert Alüminyum</div>
<svg class="abs" style="left:929.6px;top:324px" width="5" height="6" viewBox="0 0 5 6"><path d="M1.2 5.5 V0.8 M0.2 1.8 L1.2 0.6 L2.2 1.8" fill="none" stroke="#d6d8e0" stroke-width="0.6"/><path d="M3.6 0.5 V5.2 M2.6 4.2 L3.6 5.4 L4.6 4.2" fill="none" stroke="#d6d8e0" stroke-width="0.6"/></svg>
<div class="th" style="left:940.4px">Toplam KG</div>
<svg class="abs" style="left:990.1px;top:324px" width="5" height="6" viewBox="0 0 5 6"><path d="M1.2 5.5 V0.8 M0.2 1.8 L1.2 0.6 L2.2 1.8" fill="none" stroke="#d6d8e0" stroke-width="0.6"/><path d="M3.6 0.5 V5.2 M2.6 4.2 L3.6 5.4 L4.6 4.2" fill="none" stroke="#d6d8e0" stroke-width="0.6"/></svg>
<div class="rl" style="top:343.4px;background:#eff0f4"></div>
<div class="td" style="left:33.4px;top:346.90px;font-weight:700;color:#575962;font-size:7.7px;letter-spacing:0">04.09.2024</div>
<div class="td" style="left:84.2px;top:346.90px;font-size:7.4px;letter-spacing:-0.1px;color:#6f7280">FAAL</div>
<div class="td" style="left:158.5px;top:346.90px">355.000</div>
<div class="td" style="left:221.7px;top:346.90px">582</div>
<div class="td" style="left:307.5px;top:346.90px">1.000</div>
<div class="td" style="left:348.9px;top:346.90px">4.114</div>
<div class="td" style="left:381.9px;top:346.90px">1.875</div>
<div class="td" style="left:425.3px;top:346.90px">0</div>
<div class="td" style="left:469px;top:346.90px">0</div>
<div class="td" style="left:540.6px;top:346.90px">0</div>
<div class="td" style="left:611.9px;top:346.90px">0</div>
<div class="td" style="left:699px;top:346.90px">0</div>
<div class="td" style="left:750.5px;top:346.90px">0</div>
<div class="td" style="left:787.3px;top:346.90px">0</div>
<div class="td" style="left:825.4px;top:346.90px">0</div>
<div class="td" style="left:857.4px;top:346.90px">0</div>
<div class="td" style="left:940.4px;top:346.90px;color:#3dbf8c">7.571</div>
<div class="rl" style="top:358.75px"></div>
<div class="td" style="left:33.4px;top:362.25px;font-weight:700;color:#575962;font-size:7.7px;letter-spacing:0">05.09.2024</div>
<div class="td" style="left:84.2px;top:362.25px;font-size:7.4px;letter-spacing:-0.1px;color:#6f7280">FAAL</div>
<div class="td" style="left:158.5px;top:362.25px">330.000</div>
<div class="td" style="left:221.7px;top:362.25px">582</div>
<div class="td" style="left:307.5px;top:362.25px">1.000</div>
<div class="td" style="left:348.9px;top:362.25px">8.525</div>
<div class="td" style="left:381.9px;top:362.25px">1.875</div>
<div class="td" style="left:425.3px;top:362.25px">952</div>
<div class="td" style="left:469px;top:362.25px">283</div>
<div class="td" style="left:540.6px;top:362.25px">0</div>
<div class="td" style="left:611.9px;top:362.25px">0</div>
<div class="td" style="left:699px;top:362.25px">0</div>
<div class="td" style="left:750.5px;top:362.25px">0</div>
<div class="td" style="left:787.3px;top:362.25px">0</div>
<div class="td" style="left:825.4px;top:362.25px">0</div>
<div class="td" style="left:857.4px;top:362.25px">0</div>
<div class="td" style="left:940.4px;top:362.25px;color:#3dbf8c">13.217</div>
<div class="rl" style="top:374.10px"></div>
<div class="td" style="left:33.4px;top:377.60px;font-weight:700;color:#575962;font-size:7.7px;letter-spacing:0">06.09.2024</div>
<div class="td" style="left:84.2px;top:377.60px;font-size:7.4px;letter-spacing:-0.1px;color:#6f7280">FAAL</div>
<div class="td" style="left:158.5px;top:377.60px">105.000</div>
<div class="td" style="left:221.7px;top:377.60px">291</div>
<div class="td" style="left:307.5px;top:377.60px">500</div>
<div class="td" style="left:348.9px;top:377.60px">1.705</div>
<div class="td" style="left:381.9px;top:377.60px">750</div>
<div class="td" style="left:425.3px;top:377.60px">0</div>
<div class="td" style="left:469px;top:377.60px">0</div>
<div class="td" style="left:540.6px;top:377.60px">0</div>
<div class="td" style="left:611.9px;top:377.60px">0</div>
<div class="td" style="left:699px;top:377.60px">0</div>
<div class="td" style="left:750.5px;top:377.60px">0</div>
<div class="td" style="left:787.3px;top:377.60px">0</div>
<div class="td" style="left:825.4px;top:377.60px">0</div>
<div class="td" style="left:857.4px;top:377.60px">0</div>
<div class="td" style="left:940.4px;top:377.60px;color:#3dbf8c">3.246</div>
<div class="rl" style="top:389.45px"></div>
<div class="td" style="left:33.4px;top:392.95px;font-weight:700;color:#575962;font-size:7.7px;letter-spacing:0">07.09.2024</div>
<div class="td" style="left:84.2px;top:392.95px;font-size:7.4px;letter-spacing:-0.1px;color:#6f7280">FAAL</div>
<div class="td" style="left:158.5px;top:392.95px">230.000</div>
<div class="td" style="left:221.7px;top:392.95px">291</div>
<div class="td" style="left:307.5px;top:392.95px">1.500</div>
<div class="td" style="left:348.9px;top:392.95px">4.774</div>
<div class="td" style="left:381.9px;top:392.95px">1.500</div>
<div class="td" style="left:425.3px;top:392.95px">0</div>
<div class="td" style="left:469px;top:392.95px">0</div>
<div class="td" style="left:540.6px;top:392.95px">0</div>
<div class="td" style="left:611.9px;top:392.95px">0</div>
<div class="td" style="left:699px;top:392.95px">0</div>
<div class="td" style="left:750.5px;top:392.95px">0</div>
<div class="td" style="left:787.3px;top:392.95px">0</div>
<div class="td" style="left:825.4px;top:392.95px">0</div>
<div class="td" style="left:857.4px;top:392.95px">0</div>
<div class="td" style="left:940.4px;top:392.95px;color:#3dbf8c">8.065</div>
<div class="rl" style="top:404.80px"></div>
<div class="td" style="left:33.4px;top:408.30px;font-weight:700;color:#575962;font-size:7.7px;letter-spacing:0">08.09.2024</div>
<div class="td" style="left:84.2px;top:408.30px;font-size:7.4px;letter-spacing:-0.1px;color:#6f7280">FAAL</div>
<div class="td" style="left:158.5px;top:408.30px">260.000</div>
<div class="td" style="left:221.7px;top:408.30px">582</div>
<div class="td" style="left:307.5px;top:408.30px">1.000</div>
<div class="td" style="left:348.9px;top:408.30px">4.774</div>
<div class="td" style="left:381.9px;top:408.30px">1.500</div>
<div class="td" style="left:425.3px;top:408.30px">952</div>
<div class="td" style="left:469px;top:408.30px">283</div>
<div class="td" style="left:540.6px;top:408.30px">0</div>
<div class="td" style="left:611.9px;top:408.30px">0</div>
<div class="td" style="left:699px;top:408.30px">0</div>
<div class="td" style="left:750.5px;top:408.30px">0</div>
<div class="td" style="left:787.3px;top:408.30px">0</div>
<div class="td" style="left:825.4px;top:408.30px">0</div>
<div class="td" style="left:857.4px;top:408.30px">0</div>
<div class="td" style="left:940.4px;top:408.30px;color:#3dbf8c">9.091</div>
<div class="rl" style="top:420.15px"></div>
<div class="td" style="left:33.4px;top:423.65px;font-weight:700;color:#575962;font-size:7.7px;letter-spacing:0">09.09.2024</div>
<div class="td" style="left:84.2px;top:423.65px;font-size:7.4px;letter-spacing:-0.1px;color:#6f7280">FAAL</div>
<div class="td" style="left:158.5px;top:423.65px">195.000</div>
<div class="td" style="left:221.7px;top:423.65px">0</div>
<div class="td" style="left:307.5px;top:423.65px">1.000</div>
<div class="td" style="left:348.9px;top:423.65px">2.387</div>
<div class="td" style="left:381.9px;top:423.65px">375</div>
<div class="td" style="left:425.3px;top:423.65px">0</div>
<div class="td" style="left:469px;top:423.65px">0</div>
<div class="td" style="left:540.6px;top:423.65px">0</div>
<div class="td" style="left:611.9px;top:423.65px">0</div>
<div class="td" style="left:699px;top:423.65px">0</div>
<div class="td" style="left:750.5px;top:423.65px">0</div>
<div class="td" style="left:787.3px;top:423.65px">0</div>
<div class="td" style="left:825.4px;top:423.65px">0</div>
<div class="td" style="left:857.4px;top:423.65px">0</div>
<div class="td" style="left:940.4px;top:423.65px;color:#3dbf8c">3.762</div>
<div class="rl" style="top:435.50px"></div>
<div class="td" style="left:33.4px;top:439.00px;font-weight:700;color:#575962;font-size:7.7px;letter-spacing:0">10.09.2024</div>
<div class="td" style="left:84.2px;top:439.00px;font-size:7.4px;letter-spacing:-0.1px;color:#6f7280">FAAL</div>
<div class="td" style="left:158.5px;top:439.00px">305.000</div>
<div class="td" style="left:221.7px;top:439.00px">873</div>
<div class="td" style="left:307.5px;top:439.00px">1.000</div>
<div class="td" style="left:348.9px;top:439.00px">4.092</div>
<div class="td" style="left:381.9px;top:439.00px">1.125</div>
<div class="td" style="left:425.3px;top:439.00px">0</div>
<div class="td" style="left:469px;top:439.00px">0</div>
<div class="td" style="left:540.6px;top:439.00px">693</div>
<div class="td" style="left:611.9px;top:439.00px">0</div>
<div class="td" style="left:699px;top:439.00px">0</div>
<div class="td" style="left:750.5px;top:439.00px">0</div>
<div class="td" style="left:787.3px;top:439.00px">0</div>
<div class="td" style="left:825.4px;top:439.00px">0</div>
<div class="td" style="left:857.4px;top:439.00px">0</div>
<div class="td" style="left:940.4px;top:439.00px;color:#3dbf8c">7.783</div>
<div class="rl" style="top:450.85px"></div>
<div class="td" style="left:33.4px;top:454.35px;font-weight:700;color:#575962;font-size:7.7px;letter-spacing:0">11.09.2024</div>
<div class="td" style="left:84.2px;top:454.35px;font-size:7.4px;letter-spacing:-0.1px;color:#6f7280">FAAL</div>
<div class="td" style="left:158.5px;top:454.35px">330.000</div>
<div class="td" style="left:221.7px;top:454.35px">291</div>
<div class="td" style="left:307.5px;top:454.35px">0</div>
<div class="td" style="left:348.9px;top:454.35px">4.774</div>
<div class="td" style="left:381.9px;top:454.35px">2.250</div>
<div class="td" style="left:425.3px;top:454.35px">952</div>
<div class="td" style="left:469px;top:454.35px">0</div>
<div class="td" style="left:540.6px;top:454.35px">0</div>
<div class="td" style="left:611.9px;top:454.35px">0</div>
<div class="td" style="left:699px;top:454.35px">0</div>
<div class="td" style="left:750.5px;top:454.35px">0</div>
<div class="td" style="left:787.3px;top:454.35px">0</div>
<div class="td" style="left:825.4px;top:454.35px">0</div>
<div class="td" style="left:857.4px;top:454.35px">0</div>
<div class="td" style="left:940.4px;top:454.35px;color:#3dbf8c">8.267</div>
<div class="rl" style="top:466.20px"></div>
<div class="td" style="left:33.4px;top:469.70px;font-weight:700;color:#575962;font-size:7.7px;letter-spacing:0">12.09.2024</div>
<div class="td" style="left:84.2px;top:469.70px;font-size:7.4px;letter-spacing:-0.1px;color:#6f7280">FAAL</div>
<div class="td" style="left:158.5px;top:469.70px">235.000</div>
<div class="td" style="left:221.7px;top:469.70px">582</div>
<div class="td" style="left:307.5px;top:469.70px">800</div>
<div class="td" style="left:348.9px;top:469.70px">4.770</div>
<div class="td" style="left:381.9px;top:469.70px">750</div>
<div class="td" style="left:425.3px;top:469.70px">0</div>
<div class="td" style="left:469px;top:469.70px">0</div>
<div class="td" style="left:540.6px;top:469.70px">0</div>
<div class="td" style="left:611.9px;top:469.70px">0</div>
<div class="td" style="left:699px;top:469.70px">0</div>
<div class="td" style="left:750.5px;top:469.70px">0</div>
<div class="td" style="left:787.3px;top:469.70px">0</div>
<div class="td" style="left:825.4px;top:469.70px">0</div>
<div class="td" style="left:857.4px;top:469.70px">0</div>
<div class="td" style="left:940.4px;top:469.70px;color:#3dbf8c">6.902</div>
<div class="rl" style="top:481.55px"></div>
<div class="td" style="left:33.4px;top:485.05px;font-weight:700;color:#575962;font-size:7.7px;letter-spacing:0">13.09.2024</div>
<div class="td" style="left:84.2px;top:485.05px;font-size:7.4px;letter-spacing:-0.1px;color:#6f7280">FAAL</div>
<div class="td" style="left:158.5px;top:485.05px">230.000</div>
<div class="td" style="left:221.7px;top:485.05px">291</div>
<div class="td" style="left:307.5px;top:485.05px">800</div>
<div class="td" style="left:348.9px;top:485.05px">3.816</div>
<div class="td" style="left:381.9px;top:485.05px">1.875</div>
<div class="td" style="left:425.3px;top:485.05px">0</div>
<div class="td" style="left:469px;top:485.05px">0</div>
<div class="td" style="left:540.6px;top:485.05px">693</div>
<div class="td" style="left:611.9px;top:485.05px">0</div>
<div class="td" style="left:699px;top:485.05px">0</div>
<div class="td" style="left:750.5px;top:485.05px">0</div>
<div class="td" style="left:787.3px;top:485.05px">0</div>
<div class="td" style="left:825.4px;top:485.05px">0</div>
<div class="td" style="left:857.4px;top:485.05px">0</div>
<div class="td" style="left:940.4px;top:485.05px;color:#3dbf8c">7.475</div>
</body></html>
